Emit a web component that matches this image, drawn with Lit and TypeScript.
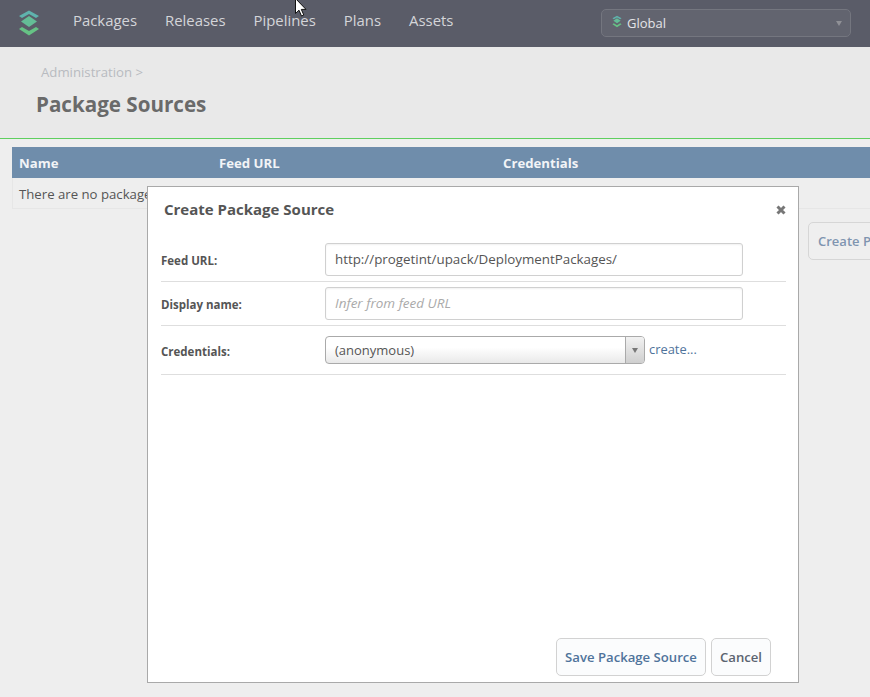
import { html, css, LitElement } from 'lit';
import { customElement } from 'lit/decorators.js';

const logo = (w: number, h: number) => html`
  <svg width=${w} height=${h} viewBox="0 0 22 26">
    <path d="M11 .5L21 6l-3 2-7-4-7 4-3-2z" fill="#5fb3ad"></path>
    <path d="M11 6l8 5.500-8 5.500-8-5.500z" fill="#64bd96"></path>
    <path d="M1 19l3-2 7 4 7-4 3 2-10 6.500z" fill="#66c285"></path>
  </svg>
`;

@customElement('app-root')
export class AppRoot extends LitElement {
  static styles = css`
    :host {
      display: block;
      position: relative;
      width: 870px;
      height: 697px;
      overflow: hidden;
      background: #eeeeee;
      font-family: 'Open Sans', 'Liberation Sans', sans-serif;
      font-size: 14px;
      color: #555;
    }

    /* top bar */
    .nav {
      height: 47px;
      background: #5a5c68;
      display: flex;
      align-items: center;
      padding-left: 18px;
      box-sizing: border-box;
    }
    .nav-logo {
      display: flex;
      width: 55px;
      margin-top: -2px;
    }
    .nav-links {
      display: flex;
      gap: 28px;
      margin-top: -7px;
      font-size: 14.900px;
      color: #d4d5d9;
    }
    .scope {
      margin-left: auto;
      margin-right: 19px;
      width: 250px;
      height: 28px;
      margin-top: -1px;
      box-sizing: border-box;
      border: 1px solid #74767f;
      border-radius: 5px;
      background: #62646f;
      display: flex;
      align-items: center;
      padding: 0 8px 0 10px;
      color: #e4e5e8;
      font-size: 13px;
    }
    .scope svg {
      margin-right: 5px;
      margin-top: -4px;
    }
    .scope .caret {
      margin-left: auto;
      width: 0;
      height: 0;
      border-left: 3px solid transparent;
      border-right: 3px solid transparent;
      border-top: 5px solid #8f9096;
    }

    /* page heading */
    .heading {
      height: 92px;
      box-sizing: border-box;
      background: #e9e9e9;
      border-bottom: 1px solid #5fcf5f;
      padding: 16px 0 0 36px;
    }
    .crumb {
      font-size: 13.200px;
      line-height: 18px;
      color: #b8bbc0;
      padding-left: 5px;
    }
    h1 {
      margin: 9px 0 0;
      font-size: 20.600px;
      line-height: 28px;
      font-weight: 700;
      color: #6a6a6a;
    }

    /* table behind the dialog */
    .content {
      padding: 8px 0 0 12px;
      width: 1000px;
    }
    .table {
      border-bottom: 1px solid #e6e6e6;
      border-left: 1px solid #e6e6e6;
    }
    .thead {
      height: 31px;
      margin-left: -1px;
      background: #6f8dab;
      color: #f2f4f7;
      font-size: 13.200px;
      font-weight: 700;
      display: grid;
      grid-template-columns: 200px 284px 1fr;
      align-items: center;
      padding-left: 7px;
    }
    .tbody {
      height: 30px;
      line-height: 33px;
      padding-left: 6px;
      font-size: 13.200px;
      color: #555;
    }
    .create-wrap {
      display: flex;
      padding: 13px 0 0 796px;
    }
    .create-btn {
      box-sizing: border-box;
      height: 38px;
      width: 120px;
      padding: 0 9px;
      border: 1px solid #d6d6d6;
      border-radius: 5px;
      background: #efefef;
      color: #7f95b0;
      font-size: 13px;
      font-weight: 600;
      line-height: 36px;
      white-space: nowrap;
    }

    /* dialog */
    .dialog {
      position: absolute;
      left: 147px;
      top: 186px;
      width: 652px;
      height: 497px;
      box-sizing: border-box;
      border: 1px solid #a9a9a9;
      background: #fff;
      padding: 0 12px 0 13px;
      display: flex;
      flex-direction: column;
    }
    .dialog-head {
      height: 48px;
      display: flex;
      align-items: center;
      justify-content: space-between;
      padding: 0 0 0 3px;
      margin-top: -1px;
      font-size: 15px;
      font-weight: 700;
      color: #555;
    }
    .title {
      margin-top: -3px;
    }
    .close {
      display: flex;
      margin-top: -1px;
    }
    .row {
      display: grid;
      grid-template-columns: 164px 1fr;
      align-items: center;
      border-bottom: 1px solid #dedede;
      height: 44px;
      box-sizing: border-box;
    }
    .row.first {
      height: 48px;
      padding-top: 4px;
    }
    .row.last {
      height: 49px;
    }
    .row label {
      padding-top: 2px;
      font-size: 11.500px;
      font-weight: 700;
      color: #555;
    }
    .field {
      box-sizing: border-box;
      width: 418px;
      height: 33px;
      border: 1px solid #d0d0d0;
      border-radius: 3px;
      background: #fff;
      box-shadow: inset 0 1px 2px rgba(0, 0, 0, 0.06);
      padding-left: 9px;
      line-height: 31px;
      font-size: 13.350px;
      color: #555;
    }
    .field.placeholder {
      font-size: 13.500px;
      font-style: italic;
      color: #aaa;
    }
    .select-row {
      display: flex;
      align-items: center;
      gap: 4px;
    }
    .select {
      box-sizing: border-box;
      width: 320px;
      height: 28px;
      border: 1px solid #aaa;
      border-radius: 4px;
      background: linear-gradient(#fff 40%, #e9e9e9);
      display: flex;
      line-height: 27px;
      font-size: 13px;
      color: #555;
      padding-left: 9px;
    }
    .select span {
      flex: 1;
    }
    .select .arrow {
      width: 18px;
      border-left: 1px solid #aaa;
      background: linear-gradient(#f2f2f2, #cfcfcf);
      border-radius: 0 3px 3px 0;
      display: flex;
      align-items: center;
      justify-content: center;
    }
    .arrow i {
      width: 0;
      height: 0;
      border-left: 3px solid transparent;
      border-right: 3px solid transparent;
      border-top: 5px solid #777;
    }
    .link {
      color: #4f739b;
      font-size: 12.900px;
      margin-top: -3px;
    }
    .actions {
      margin-top: auto;
      display: flex;
      gap: 5px;
      padding: 0 15px 6px 0;
      justify-content: flex-end;
    }
    .btn {
      box-sizing: border-box;
      height: 38px;
      padding: 0 8px;
      border: 1px solid #d2d2d2;
      border-radius: 5px;
      background: #fbfcfd;
      font-size: 13.150px;
      font-weight: 600;
      line-height: 36px;
      color: #4f739b;
    }
    .btn.plain {
      color: #5b6470;
    }

    .cursor {
      position: absolute;
      left: 295px;
      top: -2px;
      display: flex;
    }
  `;

  render() {
    return html`
      <div class="nav">
        <div class="nav-logo">${logo(22, 26)}</div>
        <div class="nav-links">
          <span>Packages</span>
          <span>Releases</span>
          <span>Pipelines</span>
          <span>Plans</span>
          <span>Assets</span>
        </div>
        <div class="scope">
          ${logo(10, 13)}
          <span>Global</span>
          <i class="caret"></i>
        </div>
      </div>

      <div class="heading">
        <div class="crumb">Administration &gt;</div>
        <h1>Package Sources</h1>
      </div>

      <div class="content">
        <div class="table">
          <div class="thead">
            <span>Name</span>
            <span>Feed URL</span>
            <span>Credentials</span>
          </div>
          <div class="tbody">There are no package sources.</div>
        </div>
        <div class="create-wrap">
          <div class="create-btn">Create Package Source</div>
        </div>
      </div>

      <div class="dialog">
        <div class="dialog-head">
          <span class="title">Create Package Source</span>
          <span class="close">
            <svg width="10" height="10" viewBox="0 0 10 10">
              <path d="M1.500 1.500l7 7M8.500 1.500l-7 7" stroke="#777" stroke-width="3"></path>
            </svg>
          </span>
        </div>
        <div class="row first">
          <label>Feed URL:</label>
          <div class="field">http://progetint/upack/DeploymentPackages/</div>
        </div>
        <div class="row">
          <label>Display name:</label>
          <div class="field placeholder">Infer from feed URL</div>
        </div>
        <div class="row last">
          <label>Credentials:</label>
          <div class="select-row">
            <div class="select">
              <span>(anonymous)</span>
              <div class="arrow"><i></i></div>
            </div>
            <span class="link">create...</span>
          </div>
        </div>
        <div class="actions">
          <div class="btn">Save Package Source</div>
          <div class="btn plain">Cancel</div>
        </div>
      </div>

      <div class="cursor">
        <svg width="12" height="19" viewBox="0 0 12 19">
          <path d="M.5.500v15l3.500-3.300 2.500 5.800 2.300-1-2.500-5.600h4.700z" fill="#fff" stroke="#111" stroke-width="1"></path>
        </svg>
      </div>
    `;
  }
}
